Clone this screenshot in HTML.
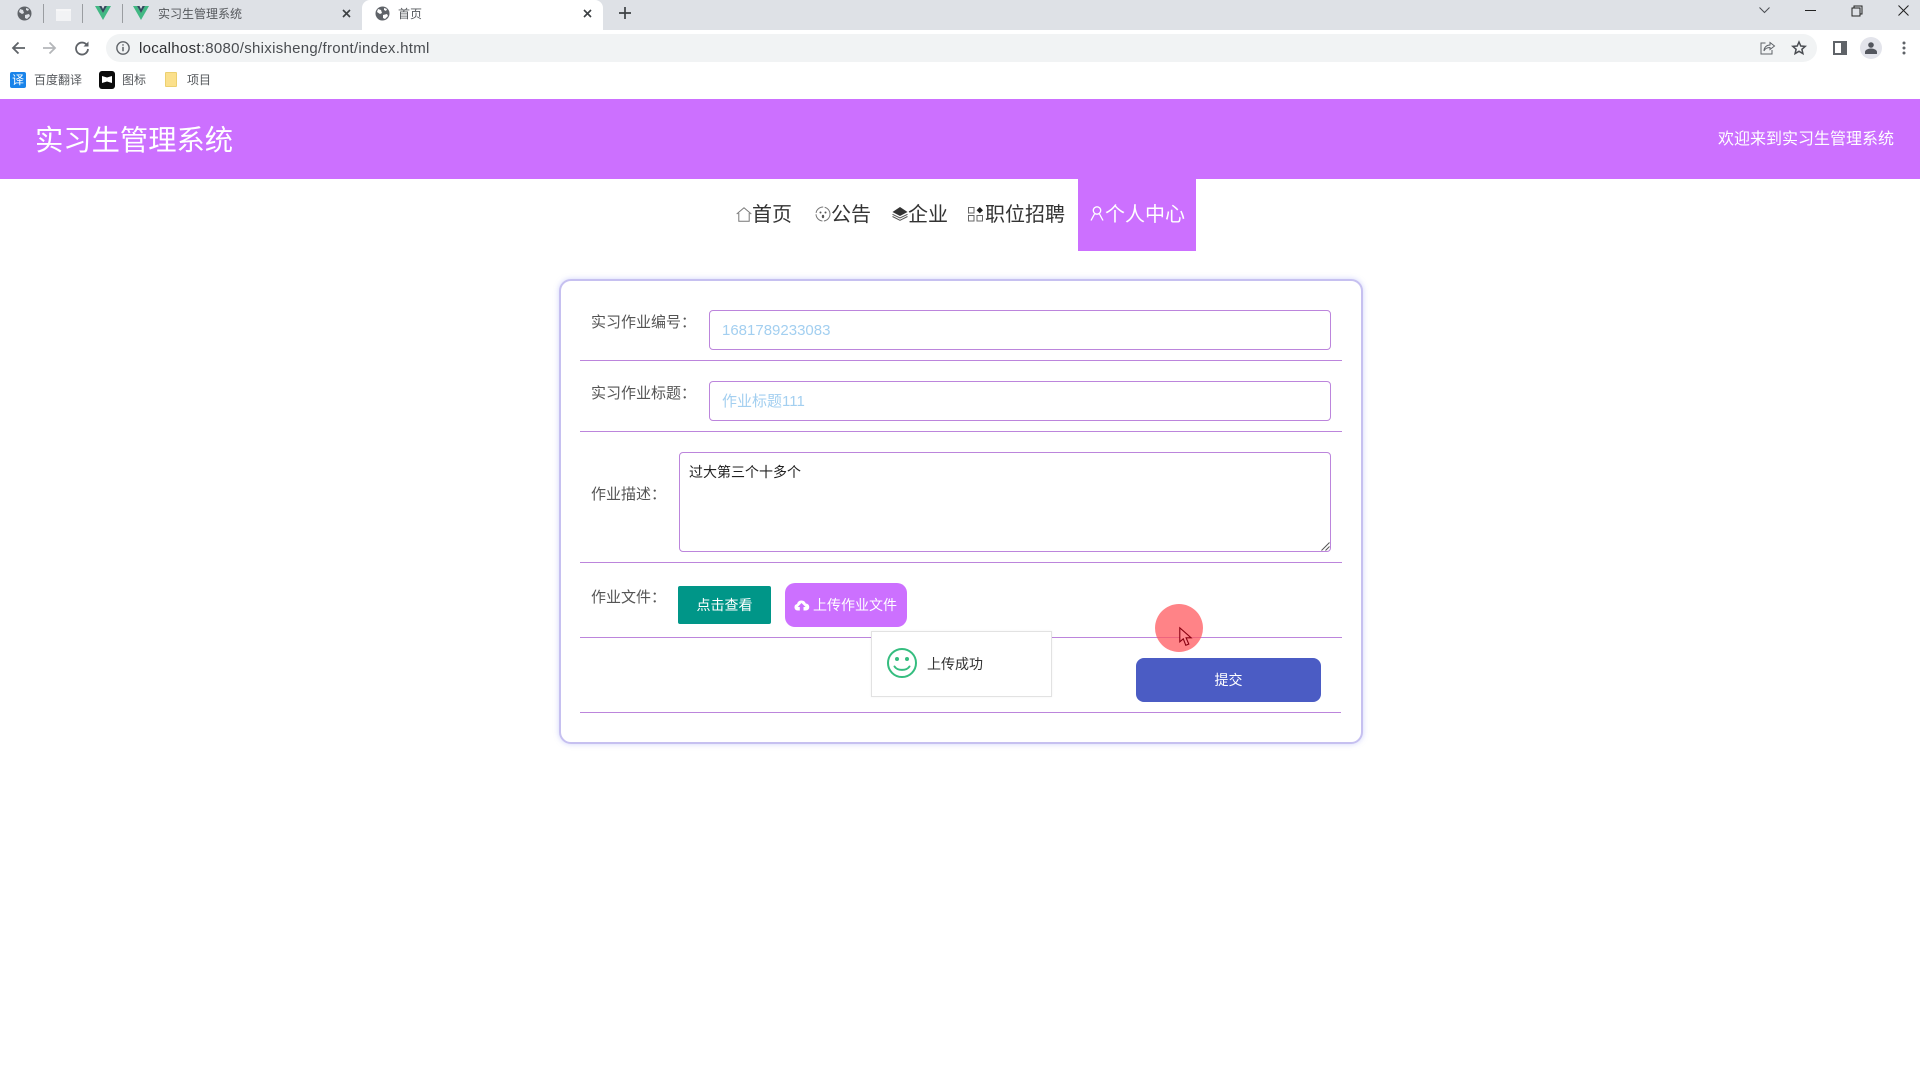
<!DOCTYPE html>
<html lang="zh-CN">
<head>
<meta charset="utf-8">
<title>首页</title>
<style>
html,body{margin:0;padding:0;background:#fff;}
body{width:1920px;height:1072px;position:relative;overflow:hidden;font-family:"Liberation Sans","Noto Sans CJK SC",sans-serif;color:#333;}
.a{position:absolute;white-space:nowrap;}
.t{position:absolute;white-space:nowrap;line-height:1;}
svg{position:absolute;overflow:visible;}
.line{position:absolute;left:580px;width:762px;height:1px;background:#bc85dc;}
.inp{position:absolute;box-sizing:border-box;border:1px solid #bc85dc;border-radius:4px;background:#fff;}
.lab{position:absolute;white-space:nowrap;font-size:15px;line-height:20px;color:#555;left:591px;}
.val{position:absolute;white-space:nowrap;font-size:15px;line-height:20px;color:#a3cff0;left:722px;}
.nav{position:absolute;white-space:nowrap;font-size:20px;line-height:28px;top:201px;color:#333;}
</style>
</head>
<body>
<!-- tab strip -->
<div class="a" style="left:0;top:0;width:1920px;height:30px;background:#dee1e6"></div>
<div class="a" style="left:362px;top:0;width:241px;height:30px;background:#fff;border-radius:8px 8px 0 0"></div>
<svg style="left:17px;top:6px" width="15" height="15" viewBox="0 0 15 15"><circle cx="7.500" cy="7.500" r="7" fill="#5f6368"/><path d="M3 3l3 1 1 3-2 1-3-2zM8 9l4-1 1 2-3 3-2-1zM9 2l3 1-1 2-2-1z" fill="#dee1e6"/></svg>
<div class="a" style="left:43px;top:4px;width:1px;height:19px;background:#9a9da1"></div>
<div class="a" style="left:56px;top:9px;width:15px;height:10px;background:#f2f3f5;border-top:2px solid #f7f7f8"></div>
<div class="a" style="left:82px;top:4px;width:1px;height:19px;background:#9a9da1"></div>
<svg style="left:95px;top:6px" width="16" height="14" viewBox="0 0 16 14"><path d="M0 0h4l4 7 4-7h4L8 14z" fill="#41b883"/><path d="M4 0h2.500L8 3l1.500-3H12L8 7z" fill="#34495e"/></svg>
<div class="a" style="left:122px;top:4px;width:1px;height:19px;background:#9a9da1"></div>
<svg style="left:133px;top:6px" width="16" height="14" viewBox="0 0 16 14"><path d="M0 0h4l4 7 4-7h4L8 14z" fill="#41b883"/><path d="M4 0h2.500L8 3l1.500-3H12L8 7z" fill="#34495e"/></svg>
<div class="t" style="left:158px;top:8px;font-size:12px;color:#55585c">实习生管理系统</div>
<svg style="left:342px;top:9px" width="9" height="9" viewBox="0 0 9 9"><path d="M1 1l7 7M8 1L1 8" stroke="#3c4043" stroke-width="1.600"/></svg>
<svg style="left:375px;top:6px" width="15" height="15" viewBox="0 0 15 15"><circle cx="7.500" cy="7.500" r="7" fill="#5f6368"/><path d="M3 3l3 1 1 3-2 1-3-2zM8 9l4-1 1 2-3 3-2-1zM9 2l3 1-1 2-2-1z" fill="#fff"/></svg>
<div class="t" style="left:398px;top:8px;font-size:12px;color:#55585c">首页</div>
<svg style="left:583px;top:9px" width="9" height="9" viewBox="0 0 9 9"><path d="M1 1l7 7M8 1L1 8" stroke="#3c4043" stroke-width="1.600"/></svg>
<svg style="left:619px;top:7px" width="12" height="12" viewBox="0 0 12 12"><path d="M6 0v12M0 6h12" stroke="#3c4043" stroke-width="1.700"/></svg>
<svg style="left:1759px;top:7px" width="11" height="7" viewBox="0 0 11 7"><path d="M.5.5l5 5 5-5" fill="none" stroke="#4a4d52" stroke-width="1"/></svg>
<div class="a" style="left:1805px;top:10px;width:11px;height:1px;background:#222"></div>
<svg style="left:1851px;top:5px" width="12" height="12" viewBox="0 0 12 12"><path d="M3 3V1h8v8H9M1 3h8v8H1z" fill="none" stroke="#222" stroke-width="1"/></svg>
<svg style="left:1898px;top:5px" width="11" height="11" viewBox="0 0 11 11"><path d="M.5.5l10 10M10.500.5l-10 10" stroke="#222" stroke-width="1"/></svg>

<!-- toolbar -->
<svg style="left:11px;top:41px" width="14" height="14" viewBox="0 0 14 14"><path d="M14 7H2M7.500 1.500L2 7l5.500 5.500" fill="none" stroke="#5f6368" stroke-width="1.800"/></svg>
<svg style="left:43px;top:41px" width="14" height="14" viewBox="0 0 14 14"><path d="M0 7h12M6.500 1.500L12 7l-5.500 5.500" fill="none" stroke="#b4b6b9" stroke-width="1.800"/></svg>
<svg style="left:75px;top:41px" width="14" height="14" viewBox="0 0 14 14"><path d="M12 4.200A6 6 0 1 0 13 8" fill="none" stroke="#5f6368" stroke-width="1.800"/><path d="M13.500 .5v5h-5z" fill="#5f6368"/></svg>
<div class="a" style="left:106px;top:34px;width:1711px;height:28px;background:#f1f3f4;border-radius:14px"></div>
<svg style="left:116px;top:41px" width="14" height="14" viewBox="0 0 13 13"><circle cx="6.500" cy="6.500" r="5.700" fill="none" stroke="#5f6368" stroke-width="1.300"/><path d="M6.500 5.500v4M6.500 3v1.300" stroke="#5f6368" stroke-width="1.400"/></svg>
<div class="t" style="left:139px;top:41px;font-size:15px;letter-spacing:.29px;color:#4a4d51"><span style="color:#303134">localhost</span>:8080/shixisheng/front/index.html</div>
<svg style="left:1760px;top:41px" width="15" height="14" viewBox="0 0 15 14"><path d="M5.500 2H1v11h11V9" fill="none" stroke="#5f6368" stroke-width="1"/><path d="M4 10c0-4 3-6 6-6V1.500L14.500 5 10 8.500V6.500c-3 0-5 1-6 3.500z" fill="none" stroke="#5f6368" stroke-width="1"/></svg>
<svg style="left:1792px;top:41px" width="14" height="14" viewBox="0 0 14 14"><path d="M7 1l1.800 4 4.400.4-3.300 2.900 1 4.300L7 10.300 3.100 12.600l1-4.300L.8 5.400 5.200 5z" fill="none" stroke="#4a4d52" stroke-width="1.500"/></svg>
<div class="a" style="left:1833px;top:41px;width:14px;height:14px;box-sizing:border-box;background:#fff;border:2px solid #5f6368;border-right-width:6px"></div>
<div class="a" style="left:1860px;top:37px;width:22px;height:22px;border-radius:50%;background:#e3e4eb"></div>
<svg style="left:1865px;top:42px" width="12" height="12" viewBox="0 0 12 12"><circle cx="6" cy="3" r="2.800" fill="#53565e"/><path d="M0 12V10c0-2 3-3.500 6-3.500s6 1.500 6 3.500v2z" fill="#53565e"/></svg>
<svg style="left:1902px;top:41px" width="4" height="14" viewBox="0 0 4 14"><circle cx="2" cy="2" r="1.500" fill="#5f6368"/><circle cx="2" cy="7" r="1.500" fill="#5f6368"/><circle cx="2" cy="12" r="1.500" fill="#5f6368"/></svg>

<!-- bookmarks -->
<div class="a" style="left:10px;top:72px;width:16px;height:16px;background:#1a84ea;border-radius:2px;color:#fff;font-size:12px;line-height:16px;text-align:center">译</div>
<div class="t" style="left:34px;top:74px;font-size:12px;color:#55585c">百度翻译</div>
<div class="a" style="left:99px;top:71px;width:16px;height:18px;background:#0b0b0b;border-radius:3px"></div>
<svg style="left:102px;top:76px" width="10" height="8" viewBox="0 0 10 8"><path d="M0 0l5 1.500L10 0v7L5 5.500 0 7z" fill="#fff"/></svg>
<div class="t" style="left:122px;top:74px;font-size:12px;color:#55585c">图标</div>
<div class="a" style="left:165px;top:72px;width:12px;height:15px;background:#fbe08c;border:1px solid #ecd070;box-sizing:border-box;border-radius:1px"></div>
<div class="t" style="left:187px;top:74px;font-size:12px;color:#55585c">项目</div>

<!-- site header -->
<div class="a" style="left:0;top:99px;width:1920px;height:80px;background:#cc70ff"></div>
<div class="t" style="left:35px;top:126px;font-size:28.300px;color:#fff">实习生管理系统</div>
<div class="t" style="left:1718px;top:132px;font-size:16px;color:#fff">欢迎来到实习生管理系统</div>

<!-- nav -->
<svg style="left:736px;top:207px" width="16" height="15" viewBox="0 0 16 15"><path d="M.7 7L8 .8 15.300 7M2.800 6v8.300h10.400V6" fill="none" stroke="#777" stroke-width="1"/></svg>
<div class="nav" style="left:752px">首页</div>
<svg style="left:815px;top:206px" width="16" height="16" viewBox="0 0 16 16"><circle cx="8" cy="8" r="7" fill="none" stroke="#777" stroke-width="1" stroke-dasharray="10 1.500"/><circle cx="5.500" cy="6.500" r="1" fill="#555"/><circle cx="10.500" cy="6.500" r="1" fill="#555"/><ellipse cx="8" cy="10.500" rx="1.200" ry="1.700" fill="#555"/></svg>
<div class="nav" style="left:831px">公告</div>
<svg style="left:892px;top:206px" width="16" height="16" viewBox="0 0 16 16"><path d="M8 1L.5 6 8 10l7.500-4z" fill="#333"/><path d="M.5 8.300L8 12l7.500-3.700M.5 10.500L8 14.300l7.500-3.800" fill="none" stroke="#555" stroke-width="1"/></svg>
<div class="nav" style="left:908px">企业</div>
<svg style="left:968px;top:207px" width="16" height="15" viewBox="0 0 16 15"><path d="M.5.5h5.500v5.500H.5zM.5 8.500h5.500v5.500H.5zM9 8.500h5.500v5.500H9z" fill="none" stroke="#666" stroke-width="1"/><path d="M11.800 0l3.200 3.200-3.200 3.200-3.200-3.200z" fill="#222"/></svg>
<div class="nav" style="left:985px">职位招聘</div>
<div class="a" style="left:1078px;top:179px;width:118px;height:72px;background:#cc70ff"></div>
<svg style="left:1090px;top:206px" width="14" height="15" viewBox="0 0 14 15"><circle cx="7" cy="4.500" r="3.700" fill="none" stroke="#fff" stroke-width="1.300"/><path d="M1 14.500L4.500 8M13 14.500L9.500 8" fill="none" stroke="#fff" stroke-width="1.300"/></svg>
<div class="nav" style="left:1105px;color:#fff">个人中心</div>

<!-- form card -->
<div class="a" style="left:559px;top:279px;width:804px;height:465px;box-sizing:border-box;border:2px solid #c6c0f0;border-radius:12px;background:#fff;box-shadow:0 0 6px rgba(120,130,240,.35)"></div>

<div class="lab" style="top:313px">实习作业编号：</div>
<div class="inp" style="left:709px;top:310px;width:622px;height:40px"></div>
<div class="val" style="top:321px">1681789233083</div>
<div class="line" style="top:360px"></div>

<div class="lab" style="top:384px">实习作业标题：</div>
<div class="inp" style="left:709px;top:381px;width:622px;height:40px"></div>
<div class="val" style="top:392px">作业标题111</div>
<div class="line" style="top:431px"></div>

<div class="lab" style="top:485px">作业描述：</div>
<div class="inp" style="left:679px;top:452px;width:652px;height:100px"></div>
<div class="a" style="left:689px;top:462px;font-size:14px;line-height:20px;color:#222">过大第三个十多个</div>
<svg style="left:1321px;top:542px" width="9" height="9" viewBox="0 0 9 9"><path d="M.5 8.500l8-8M4.500 8.500l4-4" stroke="#555" stroke-width="1"/></svg>
<div class="line" style="top:562px"></div>

<div class="lab" style="top:588px">作业文件：</div>
<div class="a" style="left:678px;top:586px;width:93px;height:38px;background:#009688;border-radius:2px;color:#fff;font-size:14px;line-height:38px;text-align:center">点击查看</div>
<div class="a" style="left:785px;top:583px;width:122px;height:44px;background:#cc70ff;border-radius:10px"></div>
<svg style="left:794px;top:599px" width="15" height="13" viewBox="0 0 15 13"><path d="M3.500 11.500A3.300 3.300 0 0 1 3 5a4.600 4.600 0 0 1 8.800-.5 3.500 3.500 0 0 1 0 7H9.500V8H11.500L7.500 4 3.800 8H5.800v3.500z" fill="#fff"/></svg>
<div class="t" style="left:813px;top:598px;font-size:14px;color:#fff">上传作业文件</div>
<div class="line" style="top:637px"></div>

<div class="a" style="left:1136px;top:658px;width:185px;height:44px;background:#4b5cc4;border-radius:8px;color:#fff;font-size:14px;line-height:44px;text-align:center">提交</div>
<div class="line" style="top:712px;width:761px"></div>

<!-- toast -->
<div class="a" style="left:871px;top:631px;width:181px;height:66px;box-sizing:border-box;background:#fff;border:1px solid #e2e2e2;box-shadow:0 0 2px rgba(0,0,0,.05)"></div>
<svg style="left:887px;top:648px" width="30" height="30" viewBox="0 0 30 30"><circle cx="15" cy="15" r="14" fill="none" stroke="#35bd7f" stroke-width="2"/><circle cx="10" cy="11" r="2" fill="#35bd7f"/><circle cx="20" cy="11" r="2" fill="#35bd7f"/><path d="M7.500 18.500c3 4.500 12 4.500 15 0" fill="none" stroke="#35bd7f" stroke-width="2" stroke-linecap="round"/></svg>
<div class="t" style="left:927px;top:657px;font-size:14px;color:#333">上传成功</div>

<!-- cursor highlight -->
<div class="a" style="left:1155px;top:604px;width:48px;height:48px;border-radius:50%;background:rgba(255,90,95,.75)"></div>
<svg style="left:1179px;top:627px" width="13" height="20" viewBox="0 0 13 20"><path d="M.8.8v14l3.500-3 2.500 6.500 3-1.200-2.700-6.300h5z" fill="#ff8a90" stroke="#8a0010" stroke-width="1.100"/></svg>
</body>
</html>
